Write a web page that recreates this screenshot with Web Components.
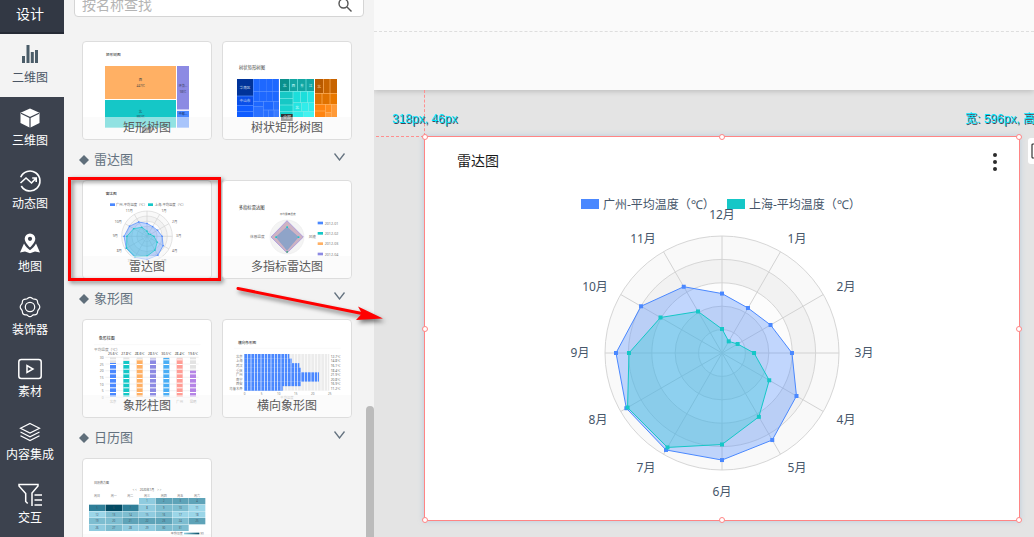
<!DOCTYPE html>
<html lang="zh-CN">
<head>
<meta charset="utf-8">
<title>设计</title>
<style>
  html, body { margin: 0; height: 100%; }
  body { overflow: hidden; font-family: "Noto Sans", "Noto Sans CJK SC", sans-serif; font-size: 12px; line-height: 16px; }
</style>
</head>
<body>
<chart-studio></chart-studio>

<template id="studio">
  <style>
    :host { display: flex; position: relative; height: 100vh; min-height: 400px; overflow: hidden; }
    side-nav { flex: none; width: 64px; }
    chart-library { flex: none; width: 310px; }
    design-canvas { flex: 1; min-width: 0; }
    .arrow { position: absolute; left: 230px; top: 280px; width: 160px; height: 48px; pointer-events: none; filter: drop-shadow(2px 3px 2px rgba(0,0,0,.5)); }
  </style>
  <side-nav>
    <nav-item icon="bars" active>二维图</nav-item>
    <nav-item icon="cube">三维图</nav-item>
    <nav-item icon="trend">动态图</nav-item>
    <nav-item icon="map">地图</nav-item>
    <nav-item icon="gear">装饰器</nav-item>
    <nav-item icon="media">素材</nav-item>
    <nav-item icon="layers">内容集成</nav-item>
    <nav-item icon="filter">交互</nav-item>
  </side-nav>
  <chart-library>
    <library-section>
      <chart-card kind="treemap">矩形树图</chart-card>
      <chart-card kind="treegrid">树状矩形树图</chart-card>
    </library-section>
    <library-section heading="雷达图">
      <chart-card kind="radar" marked>雷达图</chart-card>
      <chart-card kind="multi">多指标雷达图</chart-card>
    </library-section>
    <library-section heading="象形图">
      <chart-card kind="columns">象形柱图</chart-card>
      <chart-card kind="rows">横向象形图</chart-card>
    </library-section>
    <library-section heading="日历图">
      <chart-card kind="calendar"></chart-card>
    </library-section>
  </chart-library>
  <design-canvas>
    <chart-widget heading="雷达图"></chart-widget>
  </design-canvas>
  <svg class="arrow" viewBox="0 0 160 48" aria-hidden="true">
    <path d="M8 8.500 132 33.500" stroke="#f00" stroke-width="3" stroke-linecap="round"/>
    <path d="M153 38.500 128 26.500 132 33.500 126 40Z" fill="#f00"/>
  </svg>
</template>

<template id="side-nav">
  <style>
    :host { display: flex; flex-direction: column; background: #3c424e; color: #fff; }
    h1 { box-sizing: border-box; flex: none; height: 34px; margin: 0; padding: 4px 4px 0 0; background: #323844; border-bottom: 2px solid #252a35; font-size: 14px; line-height: 20px; font-weight: 400; text-align: center; }
    nav { flex: 1; min-height: 0; display: flex; flex-direction: column; }
  </style>
  <h1>设计</h1>
  <nav><slot></slot></nav>
</template>

<template id="nav-item">
  <style>
    :host { flex: 1; max-height: 63px; display: flex; }
    button { flex: 1; display: flex; flex-direction: column; align-items: center; gap: 3px; margin: 0; padding: 9px 4px 0 0; border: 0; background: none; color: #fff; font: inherit; white-space: nowrap; }
    :host([active]) button { background: #f3f3f3; color: #4a5564; }
    svg { width: 24px; height: 24px; flex: none; overflow: visible; }
  </style>
  <button type="button"><svg viewBox="0 0 24 24" fill="none" stroke="currentColor" stroke-width="1.200" aria-hidden="true"></svg><span><slot></slot></span></button>
</template>

<template id="chart-library">
  <style>
    :host { display: block; position: relative; background: #f3f3f3; overflow: hidden; }
    form { display: flex; align-items: center; box-sizing: border-box; height: 24px; margin: -7px 10px 24px; border: 1px solid #d5d5d5; border-radius: 4px; background: #fff; }
    input { flex: 1; min-width: 0; padding: 0 0 0 7px; border: 0; outline: 0; background: none; font: inherit; font-size: 14px; line-height: 20px; height: 20px; color: #555; }
    input::placeholder { color: #b4b4b4; opacity: 1; }
    form button { width: 36px; height: 20px; padding: 0; border: 0; background: none; }
    form svg { display: block; width: 16px; height: 16px; margin: 2px auto; }
    .thumb { position: absolute; right: 0; top: 406px; bottom: -8px; width: 8px; border-radius: 4px; background: #bbb; }
  </style>
  <form>
    <input type="search" placeholder="按名称查找" aria-label="按名称查找">
    <button type="button" aria-label="查找"><svg viewBox="0 0 16 16" fill="none" stroke="#555" stroke-width="1.400"><circle cx="6.500" cy="6.500" r="4.500"/><path d="M10 10l4.500 4.500"/></svg></button>
  </form>
  <slot></slot>
  <div class="thumb"></div>
</template>

<template id="library-section">
  <style>
    :host { display: block; padding: 0 22px 0 18px; }
    button { display: none; width: 100%; height: 40px; align-items: center; padding: 0 7px 3px 0; border: 0; background: none; color: #64727f; font: inherit; font-size: 13px; line-height: 20px; text-align: left; }
    :host([heading]) button { display: flex; }
    .mark { width: 10px; height: 10px; margin: 3px 5px 0 -3px; }
    .name { flex: 1; }
    .chev { width: 11px; height: 8px; margin-bottom: 4px; }
    .grid { display: grid; grid-template-columns: 1fr 1fr; gap: 10px; }
  </style>
  <button type="button" aria-expanded="true">
    <svg class="mark" viewBox="0 0 10 10" aria-hidden="true"><path d="M5 0l5 5-5 5-5-5z" fill="#5f6e7a"/></svg>
    <span class="name"></span>
    <svg class="chev" viewBox="0 0 11 8" fill="none" stroke="#64727f" stroke-width="1.300" aria-hidden="true"><path d="M.5.5l5 6.500 5-6.500"/></svg>
  </button>
  <div class="grid"><slot></slot></div>
</template>

<template id="chart-card">
  <style>
    :host { display: block; position: relative; box-sizing: border-box; height: 99px; border: 1px solid #ddd; border-radius: 4px; background: #fff; }
    svg { display: block; width: 100%; height: 97px; }
    .label { position: absolute; left: 0; right: 0; bottom: 0; height: 22px; line-height: 22px; text-align: center; color: #5a5a5a; background: rgba(247,247,247,.55); border-radius: 0 0 3px 3px; }
    :host([marked])::after { content: ""; position: absolute; inset: -4px -10px -3px -15px; border: 3px solid #f00; filter: drop-shadow(2px 2px 2px rgba(0,0,0,.5)); }
  </style>
  <svg viewBox="3 3 384 291" aria-hidden="true"></svg>
  <div class="label"><slot></slot></div>
</template>

<template id="design-canvas">
  <style>
    :host { display: flex; flex-direction: column; background: #e4e4e4; overflow: hidden; position: relative; }
    .top { flex: none; height: 90px; background: #fafafa; box-shadow: 0 1px 6px rgba(0,0,0,.2); }
    .rule { height: 31px; border-bottom: 1px dashed #dedede; }
    .stage { position: relative; padding: 46px 14px 16px 50px; }
    .v, .h { position: absolute; left: 50px; top: 0; height: 46px; border-left: 1px dashed #ff8f8f; }
    .h { left: 2px; top: 46px; width: 48px; height: 0; border-left: 0; border-top: 1px dashed #ff8f8f; }
    .pos, .size { position: absolute; top: 21px; left: 18px; font-family: "Liberation Sans", "Noto Sans CJK SC", sans-serif; color: #00e5ff; text-shadow: 1px 1px 0 #445; white-space: nowrap; }
    .size { left: auto; right: 0; width: 69px; }
    .tool { position: absolute; top: 48px; right: 0; width: 6px; height: 26px; padding: 0; border: 0; border-radius: 3px 0 0 3px; background: #fff; overflow: hidden; }
    .tool svg { display: block; width: 18px; height: 18px; margin-left: 3px; }
  </style>
  <div class="top"><div class="rule"></div></div>
  <div class="stage">
    <slot></slot>
    <i class="v"></i><i class="h"></i>
    <span class="pos">318px, 46px</span>
    <span class="size">宽: 596px, 高</span>
    <button class="tool" type="button" aria-label="工具"><svg viewBox="0 0 18 18" fill="none" stroke="#333" stroke-width="1.200"><rect x="1" y="2" width="15" height="14" rx="1"/></svg></button>
  </div>
</template>

<template id="chart-widget">
  <style>
    :host { display: block; position: relative; z-index: 1; border: 1px solid #ff8585; background: #fff; box-shadow: 0 0 6px rgba(120,170,210,.4); }
    header { display: flex; align-items: center; justify-content: space-between; height: 48px; padding: 0 14px 0 32px; }
    h2 { margin: 0; font-size: 14px; line-height: 20px; font-weight: 400; color: #1a1a1a; }
    header button { width: 20px; height: 24px; margin-top: 2px; padding: 0; border: 0; background: none; }
    header svg { display: block; width: 20px; height: 24px; }
    .chart { display: block; width: 100%; height: auto; font-size: 12px; }
    .knob { position: absolute; width: 4px; height: 4px; margin: -3px; border: 1px solid #ff8585; border-radius: 50%; background: #fff; }
  </style>
  <header><h2></h2><button type="button" aria-label="更多"><svg viewBox="0 0 20 24" fill="#2b2b2b"><circle cx="10" cy="5" r="2"/><circle cx="10" cy="12" r="2"/><circle cx="10" cy="19" r="2"/></svg></button></header>
  <svg class="chart" viewBox="0 0 594 335" role="img" aria-label="雷达图"></svg>
</template>

<script>
const BLUE = '#4a88ff', TEAL = '#15c7c7', ORANGE = '#ffb064', PURPLE = '#8c8ae3';

const ICONS = {
  bars: '<g fill="#4a5c68" stroke="none"><path d="M4 13h3v7H4zM8.500 2h3v18h-3zM12.800 9h3v11h-3zM17 7h3v13h-3z"/></g>',
  cube: '<path d="M12 2.500l9.500 4.300v10.200L12 21.700 2.500 17V6.800z" fill="currentColor" stroke="none"/><path d="M3 7.200l9 4.300 9-4.300M12 11.500V22" stroke="#3c424e"/>',
  trend: '<path d="M2.700 8.200A10 10 0 1 1 3.300 17M2.500 14l5.500-5 5.500 5 4.300-4.600M14.200 9h4v4" stroke-width="1.600"/>',
  map: '<path fill-rule="evenodd" d="M12 1.500a5.300 5.300 0 0 0-5.300 5.300c0 4 5.300 8.700 5.300 8.700s5.300-4.700 5.300-8.700A5.300 5.300 0 0 0 12 1.500zm0 3.200a2.100 2.100 0 1 1 0 4.200 2.100 2.100 0 0 1 0-4.200z" fill="currentColor" stroke="none"/><path d="M6 11.500L2 20.500l5-1 5 1.800 5-1.800 5 1-4-9c-1.400 2.800-3.500 5-6 6.800-2.500-1.800-4.600-4-6-6.800z" fill="currentColor" stroke="none"/>',
  gear: '<circle cx="12" cy="12" r="4.700"/><path d="M12 2.300c1.800 0 2.200 1.400 3.300 1.700s2.400-.3 3.500.9.600 2.400 1.100 3.500 1.900 1.700 1.900 3.600-1.400 2.400-1.900 3.500.1 2.400-1.100 3.500-2.400.6-3.500.9-1.500 1.800-3.300 1.800-2.200-1.500-3.300-1.800-2.400.2-3.500-.9-.6-2.400-1.100-3.500S2.200 13.900 2.200 12s1.400-2.500 1.900-3.600-.1-2.400 1.100-3.500 2.400-.6 3.500-.9 1.500-1.700 3.300-1.700z"/>',
  media: '<rect x=".8" y="2.500" width="22.400" height="19" rx="2.500" stroke-width="1.500"/><path d="M9 8.500v7l6-3.500z" stroke-width="1.500"/>',
  layers: '<path d="M12 3.500l9.500 4.800L12 13 2.500 8.300zM2.500 12l9.500 4.800 9.500-4.800M2.500 15.700l9.500 4.800 9.500-4.800"/>',
  filter: '<path d="M9.700 20.500l-2-2V10.500L1 3V1.500h19V3l-6 7v13M16.500 12H24M16.500 17H24M16.500 22H24" stroke-width="1.500"/>'
};

const t = (x, y, s, size = 10, fill = '#666', anchor = 'start') =>
  `<text x="${x}" y="${y}" font-size="${size}" fill="${fill}" text-anchor="${anchor}" dominant-baseline="central">${s}</text>`;
const r = (x, y, w, h, fill) => `<rect x="${x}" y="${y}" width="${w}" height="${h}" fill="${fill}"/>`;

/* Monthly mean temperature as a share of the outer ring, clockwise from December. */
const GUANGZHOU = [.508, .444, .479, .598, .735, .859, .915, .957, .944, .906, .799, .654];
const SHANGHAI = [.205, .115, .154, .274, .466, .630, .782, .932, .932, .795, .607, .410];

function polar(cx, cy, rad, i, n = 12) {
  const a = i / n * Math.PI * 2;
  return [cx + rad * Math.sin(a), cy - rad * Math.cos(a)];
}
function radarShape(cx, cy, rad, dot, line) {
  let s = '';
  ['#f9f9f9', '#f2f2f2', '#fcfcfc', '#f4f4f4', '#fcfcfc'].forEach((c, k) => {
    s += `<circle cx="${cx}" cy="${cy}" r="${rad * (5 - k) / 5}" fill="${c}" stroke="#d6d6d6" stroke-width="${line}"/>`;
  });
  for (let i = 0; i < 12; i++) {
    const [x, y] = polar(cx, cy, rad, i);
    s += `<path d="M${cx} ${cy}L${x} ${y}" stroke="#d2d2d2" stroke-width="${line}"/>`;
  }
  const area = (vals, stroke, fill) => {
    const pts = vals.map((v, i) => polar(cx, cy, rad * v, i));
    s += `<polygon points="${pts.map(p => p.join()).join(' ')}" fill="${fill}" stroke="${stroke}" stroke-width="${line}"/>`;
    pts.forEach(p => s += r(p[0] - dot / 2, p[1] - dot / 2, dot, dot, stroke));
  };
  area(GUANGZHOU, BLUE, 'rgba(74,136,255,.33)');
  area(SHANGHAI, TEAL, 'rgba(60,200,215,.38)');
  return s;
}

const THUMBS = {
  treemap() {
    return t(72, 40, '矩形树图', 11, '#222')
      + r(69, 75, 213, 99, ORANGE) + r(69, 177, 213, 83, TEAL) + r(285, 75, 36, 129, PURPLE)
      + r(285, 204, 36, 4, '#c5c4f2') + r(285, 210, 36, 50, BLUE)
      + t(175, 116, '西', 10, '#444', 'middle') + t(176, 136, '447亿', 9, '#444', 'middle')
      + t(175, 210, '北', 10, '#245', 'middle') + t(176, 228, '382亿', 9, '#245', 'middle')
      + t(303, 134, '环渤...', 9, '#446', 'middle') + t(303, 153, '98亿', 9, '#446', 'middle')
      + t(303, 219, '中部...', 9, '#124', 'middle') + r(180, 259, 28, 17, '#444') + t(194, 267, '全部', 10, '#fff', 'middle');
  },
  treegrid() {
    let s = t(51, 79, '树状矩形树图', 13, '#444') + r(45, 114, 126, 114, '#5f96ff') + r(174, 114, 102, 114, '#7eeae6') + r(279, 114, 66, 114, '#ffb566');
    s += r(45, 114, 48, 50, '#003399') + r(45, 166, 48, 26, '#0a4fe8') + r(45, 194, 48, 16, '#0f5cff') + r(45, 212, 48, 16, '#0f5cff');
    for (let i = 0; i < 4; i++) s += r(95 + i * 19, 114, 18, 36, '#1e68ff');
    for (let i = 0; i < 4; i++) s += r(95 + i * 19, 152, 18, 28, '#1e68ff');
    s += r(95, 182, 28, 14, '#1e68ff') + r(95, 198, 28, 30, '#2a70ff') + r(125, 182, 28, 24, '#1e68ff') + r(125, 208, 14, 20, '#2a70ff') + r(141, 208, 14, 20, '#2a70ff') + r(155, 182, 16, 24, '#2a70ff') + r(157, 208, 14, 20, '#3a7bff');
    s += r(174, 114, 27, 36, '#0b8f8c');
    for (let i = 0; i < 3; i++) s += r(203 + i * 25, 114, 23, 36, '#12a5a2');
    s += r(174, 152, 38, 19, '#16c8c5') + r(174, 173, 38, 18, '#16c8c5') + r(174, 193, 38, 18, '#18d2ce') + r(174, 213, 38, 15, '#18d2ce');
    s += r(214, 152, 20, 32, '#1cdedb') + r(236, 152, 19, 32, '#1cdedb') + r(257, 152, 19, 32, '#25e5e2') + r(214, 186, 24, 24, '#25e5e2') + r(240, 186, 18, 24, '#30ecea') + r(260, 186, 16, 24, '#30ecea') + r(214, 212, 30, 16, '#30ecea') + r(246, 212, 30, 16, '#44f2f0');
    s += r(279, 114, 24, 42, '#b85a00') + r(305, 114, 18, 42, '#c86400') + r(325, 114, 20, 42, '#c86400') + r(279, 158, 20, 31, '#e07200') + r(301, 158, 22, 31, '#e07200') + r(325, 158, 20, 31, '#e87800') + r(279, 191, 30, 18, '#ff8410') + r(279, 211, 30, 17, '#ff8410') + r(311, 191, 16, 22, '#ff8c1c') + r(329, 191, 16, 37, '#ff9a38') + r(311, 215, 16, 13, '#ff9a38');
    s += t(69, 139, '华南区', 11, '#cde', 'middle') + t(69, 179, '中山市', 11, '#cde', 'middle');
    ['北', '西', '东', '江'].forEach((c, i) => s += t(188 + i * 26, 134, c, 11, '#cff', 'middle'));
    return s + t(225, 198, '北', 11, '#eff', 'middle') + t(291, 136, '北', 11, '#fdb', 'middle') + r(177, 219, 35, 21, '#333') + t(195, 229, '全部', 12, '#ddd', 'middle');
  },
  radar() {
    let s = t(71, 40, '雷达图', 11, '#222') + r(84, 70, 15, 8, BLUE) + t(102, 74, '广州-平均温度（℃）', 10)
      + r(198, 70, 15, 8, TEAL) + t(218, 74, '上海-平均温度（℃）', 10) + radarShape(195, 169, 76, 4, 2);
    [['11月', 142, 91], ['1月', 246, 91], ['10月', 109, 123], ['2月', 278, 123], ['9月', 100, 167], ['3月', 290, 167], ['8月', 112, 210], ['4月', 278, 210], ['7月', 144, 242], ['5月', 246, 242]]
      .forEach(([m, x, y]) => s += t(x, y, m, 10, '#666', 'middle'));
    return s;
  },
  multi() {
    let s = t(50, 80, '多指标雷达图', 13, '#333') + '<circle cx="195" cy="171" r="51" fill="#f4f4f4" stroke="#e2e2e2"/>'
      + '<path d="M195 122l49 49-49 48-48-48z" fill="#cdb3c3" stroke="#9b8ae0" stroke-width="2"/>'
      + '<path d="M195 141l34 30-34 40-33-40z" fill="#8fa4c8" stroke="#6d8fd0"/>'
      + r(193, 139, 5, 5, TEAL) + r(227, 169, 5, 5, TEAL) + r(160, 169, 5, 5, TEAL) + r(193, 213, 5, 5, '#4fae86')
      + t(197, 103, '平均最高温度', 8, '#666', 'middle') + t(106, 170, '体感温度', 11, '#777', 'middle') + t(271, 170, '风速', 11, '#777', 'middle');
    [BLUE, TEAL, ORANGE, PURPLE].forEach((c, i) => s += r(287, 125 + i * 31, 16, 8, c) + t(308, 129 + i * 31, '2012-0' + (i + 1), 11, '#777'));
    return s;
  },
  columns() {
    let s = t(50, 58, '象形柱图', 12, '#222') + '<path d="M36 77h320" stroke="#eee"/>' + t(36, 91, '平均温度（℃）', 11, '#888');
    [30, 25, 20, 15, 10, 5, 0].forEach((v, i) => s += t(65, 115 + i * 20, v, 10, '#777', 'end') + `<path d="M70 ${115 + i * 20}h280" stroke="#ececec" stroke-width="2"/>`);
    [['25.6', 132, BLUE, '北京'], ['27.8', 126, TEAL, '上海'], ['28.6', 121, ORANGE, '深圳'], ['28.5', 119, PURPLE, '武汉'], ['30.5', 117, '#4aaef5', '重庆'], ['28.4', 119, '#ff9d95', '广州'], ['19.6', 155, '#b584e6', '昆明']]
      .forEach(([v, top, c, city], i) => {
        const x = 84 + i * 40;
        s += r(x, 115, 18, top - 115, '#e3e3e3') + r(x, top, 18, 234 - top, c);
        for (let y = 121; y < 234; y += 14) s += r(x, y, 18, 3, '#fff');
        s += t(x + 9, 103, v + '℃', 10, '#333', 'middle') + t(x + 9, 246, city, 10, '#777', 'middle');
      });
    return s;
  },
  rows() {
    let s = t(48, 70, '横向象形图', 11, '#222') + '<path d="M36 88h320" stroke="#eee"/>' + r(67, 105, 255, 110, '#ececec');
    [['北京', 202, '12.7℃'], ['上海', 210, '14.8℃'], ['武汉', 232, '16.1℃'], ['重庆', 237, '18.4℃'], ['广州', 291, '21.9℃'], ['南宁', 291, '20.8℃'], ['西安', 237, '16.9℃'], ['乌鲁木齐', 182, '11.2℃']]
      .forEach(([n, end, v], i) => {
        const y = 105 + i * 13.75;
        s += r(67, y, end - 67, 14, BLUE) + t(62, y + 7, n, 10, '#777', 'end') + t(326, y + 7, v, 10, '#666');
      });
    for (let x = 76; x < 322; x += 10) s += r(x, 105, 2, 110, '#fff');
    [0, 5, 10, 15, 20, 25].forEach((v, i) => s += t(68 + i * 51, 224, v, 9, '#777', 'middle'));
    return s + t(195, 234, '平均温度', 10, '#999', 'middle');
  },
  calendar() {
    const tones = { a: '#8fcbdf', b: '#5ea3b8', c: '#2f7f99', d: '#024a63', e: '#7dbdd0', f: '#9bd6e8' };
    let s = t(36, 74, '日历热力图', 9, '#555') + t(195, 95, '&lt; &lt;　2020年1月　&gt; &gt;', 9, '#555', 'middle');
    ['周日', '周一', '周二', '周三', '周四', '周五', '周六'].forEach((w, i) => s += t(45 + i * 50, 113, w, 9, '#777', 'middle'));
    let day = 0;
    ['   abbb', 'cdcaeef', 'feeaeff', 'eebbbeb', 'aeaaee '].forEach((row, j) => [...row].forEach((k, i) => {
      if (k === ' ') return;
      s += r(21 + i * 50, 120 + j * 20, 49, 19, tones[k]) + t(45 + i * 50, 130 + j * 20, ++day, 8, '#456', 'middle');
    }));
    return s + '<defs><linearGradient id="g"><stop stop-color="#8fd0e2"/><stop offset="1" stop-color="#024a63"/></linearGradient></defs>'
      + t(302, 227, '平均温度', 9, '#666', 'end') + r(306, 224, 46, 6, 'url(#g)') + t(355, 227, '30', 9, '#666');
  }
};

class Part extends HTMLElement {
  constructor() {
    super();
    this.attachShadow({ mode: 'open' }).append(document.getElementById(this.constructor.view).content.cloneNode(true));
  }
  find(sel) { return this.shadowRoot.querySelector(sel); }
}
const define = (name, view, ready) => customElements.define(name, class extends Part {
  static view = view;
  connectedCallback() { if (ready) ready.call(this); }
});

define('side-nav', 'side-nav');
define('nav-item', 'nav-item', function () {
  this.find('svg').innerHTML = ICONS[this.getAttribute('icon')];
});
define('chart-library', 'chart-library');
define('library-section', 'library-section', function () {
  this.find('.name').textContent = this.getAttribute('heading') || '';
});
define('chart-card', 'chart-card', function () {
  this.find('svg').innerHTML = THUMBS[this.getAttribute('kind')]();
});
define('design-canvas', 'design-canvas');
define('chart-widget', 'chart-widget', function () {
  this.find('h2').textContent = this.getAttribute('heading');
  const ink = '#46566a';
  let s = radarShape(297, 168, 117, 4, 1);
  [['12月', 297, 29], ['1月', 372, 53], ['2月', 421, 101], ['3月', 439, 167], ['4月', 421, 234], ['5月', 372, 282], ['6月', 297, 306], ['7月', 221, 282], ['8月', 173, 234], ['9月', 155, 167], ['10月', 170, 101], ['11月', 218, 53]]
    .forEach(([m, x, y]) => s += t(x, y, m, 12, ink, 'middle'));
  s += r(156, 14, 18, 10, BLUE) + t(178, 19, '广州-平均温度（℃）', 12, ink) + r(302, 14, 18, 10, TEAL) + t(324, 19, '上海-平均温度（℃）', 12, ink);
  this.find('.chart').innerHTML = s;
  for (const [x, y] of [[0, 0], [50, 0], [100, 0], [0, 50], [100, 50], [0, 100], [50, 100], [100, 100]]) {
    const k = document.createElement('i');
    k.className = 'knob';
    k.style.left = x + '%';
    k.style.top = y + '%';
    this.shadowRoot.append(k);
  }
});
define('chart-studio', 'studio');
</script>
</body>
</html>
